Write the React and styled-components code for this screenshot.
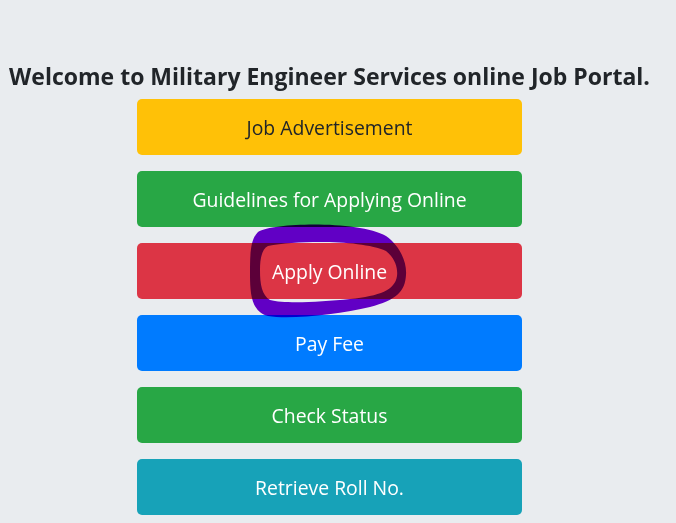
import React from "react";
import styled, { createGlobalStyle } from "styled-components";

const GlobalStyle = createGlobalStyle`
  html, body {
    margin: 0;
    padding: 0;
    background: #e9ecef;
  }
  body {
    font-family: "Open Sans", "Noto Sans", sans-serif;
    color: #212529;
  }
`;

const Page = styled.div`
  position: relative;
  width: 659px;
  height: 523px;
  overflow: hidden;
`;

const Title = styled.h4`
  margin: 0;
  padding-top: 62px;
  font-size: 23px;
  font-weight: 700;
  line-height: 29px;
  text-align: center;
  white-space: nowrap;
`;

const Menu = styled.div`
  display: flex;
  flex-direction: column;
  gap: 16px;
  width: 385px;
  margin: 8px auto 0;
`;

const COLORS = {
  warning: { bg: "#ffc107", fg: "#212529" },
  success: { bg: "#28a745", fg: "#ffffff" },
  danger: { bg: "#dc3545", fg: "#ffffff" },
  primary: { bg: "#007bff", fg: "#ffffff" },
  info: { bg: "#17a2b8", fg: "#ffffff" },
};

const MenuButton = styled.a`
  display: flex;
  align-items: center;
  justify-content: center;
  height: 56px;
  border-radius: 5px;
  background: ${(p) => COLORS[p.variant].bg};
  color: ${(p) => COLORS[p.variant].fg};
  font-size: 19.4px;
  text-decoration: none;
  cursor: pointer;
`;

const Scribble = styled.svg`
  position: absolute;
  top: 0;
  left: 0;
  width: 676px;
  height: 523px;
  pointer-events: none;
  mix-blend-mode: multiply;
`;

const links = [
  { label: "Job Advertisement", variant: "warning" },
  { label: "Guidelines for Applying Online", variant: "success" },
  { label: "Apply Online", variant: "danger" },
  { label: "Pay Fee", variant: "primary" },
  { label: "Check Status", variant: "success" },
  { label: "Retrieve Roll No.", variant: "info" },
];

export default function App() {
  return (
    <>
      <GlobalStyle />
      <Page>
        <Title>Welcome to Military Engineer Services online Job Portal.</Title>
        <Menu>
          {links.map((l) => (
            <MenuButton key={l.label} variant={l.variant}>
              {l.label}
            </MenuButton>
          ))}
        </Menu>
        {/* hand drawn marker around "Apply Online" */}
        <Scribble viewBox="0 0 676 523">
          <path
            fillRule="evenodd"
            fill="#6a00d2"
            d="M258 232 C275 222 360 221 386 236 C400 246 407 262 406 275 C405 292 396 300 370 307 C340 314 290 320 268 316 C252 312 250 295 250 275 C250 255 250 240 258 232 Z
               M268 246 C300 240 362 240 386 251 C395 258 398 268 397 276 C395 290 380 296 350 299 C320 302 285 304 270 300 C262 295 260 285 260 270 C260 258 262 249 268 246 Z"
          />
        </Scribble>
      </Page>
    </>
  );
}
